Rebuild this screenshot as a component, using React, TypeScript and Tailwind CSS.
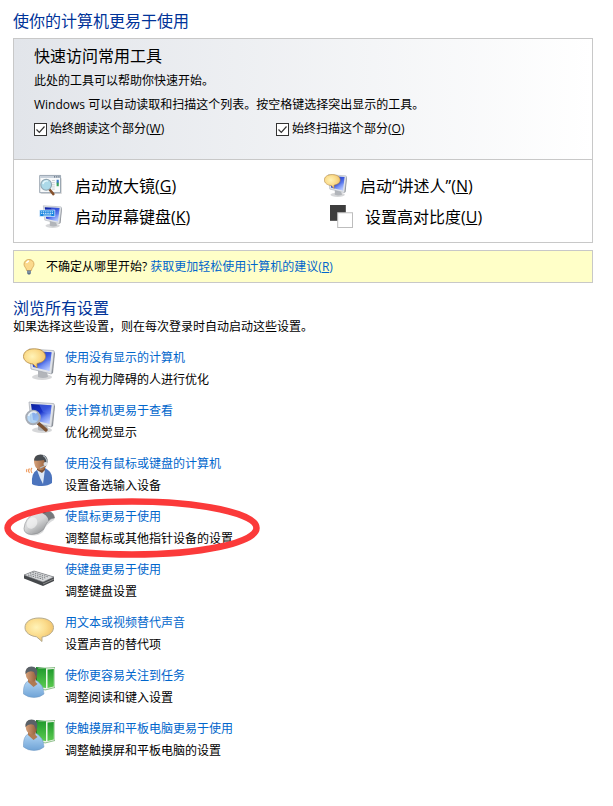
import type { ReactNode } from 'react'

// Gradients shared by all of the icons below.
function IconDefs() {
  return (
    <svg aria-hidden className="absolute size-0">
      <defs>
        <linearGradient id="screen" x1="0" y1="0" x2=".7" y2="1">
          <stop offset="0" stopColor="#0a1f9c" />
          <stop offset=".5" stopColor="#1a35cc" />
          <stop offset=".75" stopColor="#6f8cf2" />
          <stop offset="1" stopColor="#b4c6ff" />
        </linearGradient>
        <linearGradient id="metal" x1="0" y1="0" x2=".8" y2="1">
          <stop offset="0" stopColor="#f2f2f2" />
          <stop offset=".5" stopColor="#d4d5d6" />
          <stop offset="1" stopColor="#808285" />
        </linearGradient>
        <radialGradient id="gold" cx=".4" cy=".4" r=".7">
          <stop offset="0" stopColor="#fff3b8" />
          <stop offset=".5" stopColor="#fbdc8c" />
          <stop offset="1" stopColor="#eebb62" />
        </radialGradient>
        <linearGradient id="skin" x1="0" y1="0" x2="1" y2="0">
          <stop offset="0" stopColor="#d8a27a" />
          <stop offset="1" stopColor="#8e5a38" />
        </linearGradient>
        <linearGradient id="shirt" x1="0" y1="0" x2="0" y2="1">
          <stop offset="0" stopColor="#b5d8f6" />
          <stop offset="1" stopColor="#6fa3d6" />
        </linearGradient>
        <linearGradient id="book" x1="0" y1="0" x2="0" y2="1">
          <stop offset="0" stopColor="#1f9a2c" />
          <stop offset="1" stopColor="#5ccb50" />
        </linearGradient>
      </defs>
    </svg>
  )
}

function Monitor() {
  return (
    <g>
      <ellipse cx="19" cy="29" rx="10" ry="3" fill="#d6d7d9" />
      <path d="M15 22l9 2 1 5q-5 2-10 0z" fill="#b2b5ba" />
      <path d="M6 1L30 2.500q1.500 0 1.300 1.500L28.500 26 8 21z" fill="#e0e3e8" stroke="#a3a8b0" strokeWidth=".7" />
      <path d="M8 3l20.500 1.200-2 18.800L10 19z" fill="url(#screen)" />
      <path d="M16 3.500l12.500 .7-1 9L20 11z" fill="#5d7df0" opacity=".45" />
      <path d="M31.200 4l-2.700 22 1.500-1L32 5z" fill="#8d9299" />
    </g>
  )
}

function NarratorIcon() {
  return (
    <g>
      <Monitor />
      <path
        d="M11.500 .8C4.500.8.5 4 .5 8.500c0 4 4 7 9.500 7.500l4 4V15.500c5.500-.8 8.500-3.500 8.500-7 0-4.500-4.500-7.700-11-7.700z"
        fill="url(#gold)"
        stroke="#b38a45"
        strokeWidth=".8"
      />
    </g>
  )
}

function DisplayIcon() {
  return (
    <g>
      <Monitor />
      <path d="M15 22l8 7" stroke="#7c5334" strokeWidth="3.400" strokeLinecap="round" />
      <circle cx="10" cy="16.500" r="6.800" fill="#a8d0f5" fillOpacity=".8" stroke="#a7adb6" strokeWidth="2" />
      <path d="M5.500 15a5 5 0 0 1 8-3" fill="none" stroke="#fff" strokeOpacity=".7" strokeWidth="1.800" />
    </g>
  )
}

function HeadsetIcon() {
  return (
    <g>
      <path d="M9 30q-1-11 5-14l3-2h5l3 2q5 3 4 13-4 3-10 3-7 0-10-2z" fill="#4c74bd" />
      <path d="M14 16l3-2 5 1-2 15-3-6z" fill="#dce8f7" />
      <path d="M14 12h8v4l-3 3-5-3z" fill="#7d5236" />
      <path d="M11 7q0-6 6.500-6Q24 1 24 8q0 5-3.500 7.500-3 1.500-6-.5Q11 12 11 7z" fill="url(#skin)" />
      <path d="M11 6.500Q11.500 .5 17.500.5 25 .5 24.500 8L23 12l-2-6q-5 1-10 .5z" fill="#474c51" />
      <path d="M20 1.500q5 3 3.500 9.500L17 14" fill="none" stroke="#b4bdc6" strokeWidth="1.100" />
      <circle cx="22.500" cy="10" r="2" fill="#dce1e6" />
      <path d="M9 14q-2 2 0 5M6.500 14.500q-2 2 0 4.500M4 15q-1 2 0 3" fill="none" stroke="#ef9a5c" strokeWidth="1.100" />
    </g>
  )
}

function MouseIcon() {
  return (
    <g>
      <path d="M4 27q9 4 16-2 3-8 11-12l1-3-4 1-11 8z" fill="#c2c3c5" opacity=".6" />
      <path
        d="M1 21.500Q2 11 12 6q6-3 13-2 6 1 6.500 7-4 0-7 4-2 3-4 7.500-5 5-12 5-7.500-.5-7.500-6z"
        fill="url(#metal)"
        stroke="#8b8d90"
        strokeWidth=".6"
      />
      <path d="M15 5q6-2.500 11-1 5 2 5.500 7-4 0-6 3Q25 7 15 5z" fill="#76797c" />
      <path d="M17 4.500l4-1 2.500 1.500-3 1z" fill="#313437" />
      <ellipse cx="9" cy="16" rx="5" ry="6" transform="rotate(35 9 16)" fill="#fff" opacity=".5" />
    </g>
  )
}

function KeyboardIcon() {
  return (
    <g>
      <path d="M1 15l10-4 20 6v4l-11 5L1 18.500z" fill="#45484b" />
      <path d="M1 15l10-4 20 6-11 5z" fill="#d9dbdd" stroke="#77797d" strokeWidth=".6" />
      <path
        d="M5 15l16 4.500M7 13.700l16 4.500M9.500 12.500l16 4.500"
        stroke="#6c6f73"
        strokeWidth=".9"
        strokeDasharray="1.500 .9"
      />
      <path d="M20 24l11-5" stroke="#999" strokeWidth=".8" />
    </g>
  )
}

function BubbleIcon() {
  return (
    <g>
      <path
        d="M16 5C7.500 5 2 9 2 14.500c0 5 5 8.500 11.500 9.300l5.500 4.700V24c6.500-.8 11.500-4.500 11.500-9.500C30.500 9 24.500 5 16 5z"
        fill="url(#gold)"
        stroke="#b5ab8e"
        strokeWidth="1"
      />
    </g>
  )
}

function PersonBookIcon() {
  return (
    <g>
      <path d="M13 1l9 1v20l-9-2z" fill="#1b8228" />
      <path d="M15 2.500L32 1.500v20L22 24l-7-3z" fill="#eef6ea" stroke="#4f9b4c" strokeWidth=".6" />
      <path d="M14 3l9-.8V22l-9-1z" fill="url(#book)" />
      <path d="M24.500 3.500l6.300-.6v17.600l-6.300 1.600z" fill="url(#book)" />
      <path d="M.5 28q-1-11 6-14h6q8 4 8.500 14-4 3.500-10 3.500T.5 28z" fill="url(#shirt)" stroke="#6f97c0" strokeWidth=".5" />
      <path d="M5 12h7.500v4l2 2-4 3-5.500-5z" fill="#b07a52" />
      <path d="M2.500 7Q2.500 1 8.500 1 14 1 14 8q0 6-4 8-7-1-7.500-9z" fill="url(#skin)" />
      <path d="M2.500 8Q2 .5 8.500.5 15 .5 14.200 8L13 11l-2-5q-5-2-8.500 2z" fill="#596168" />
    </g>
  )
}

function MagnifierIcon() {
  return (
    <g>
      <path d="M3 27h28V6" fill="none" stroke="#ddd" strokeWidth="1.500" />
      <path d="M1 2h29v24H1z" fill="#f8fafb" stroke="#8593a1" strokeWidth="1.200" />
      <path d="M1.600 2.600h27.800v3H1.600z" fill="#c9d2dc" />
      <path d="M21 4h1.500M24 4h1.500M27 4h1.500" stroke="#506070" strokeWidth="1.500" />
      <path d="M18 9h4M18 12h4M18 15h4M18 18h4M18 21h4" stroke="#b7bdc3" strokeWidth="1" />
      <path d="M24.500 8h3v5h-3z" fill="#3a78c8" />
      <path d="M24.500 12h3v5h-3z" fill="#3aa05f" />
      <path d="M15 22l5 6" stroke="#86512c" strokeWidth="3.500" strokeLinecap="round" />
      <circle cx="10" cy="15" r="7.500" fill="#acd9e8" stroke="#8fa5b2" strokeWidth="1.500" />
      <path d="M5.500 14a5 5 0 0 1 7-4" fill="none" stroke="#e5f7fc" strokeWidth="2" />
    </g>
  )
}

function OnScreenKeyboardIcon() {
  return (
    <g>
      <Monitor />
      <path d="M1 7h21v9H1z" fill="#1584e0" stroke="#e8f3fd" strokeWidth="1" />
      <path d="M3 9.500h17M3 11.800h17" stroke="#fff" strokeWidth="1.200" strokeDasharray="1.500 1" />
      <path d="M6 14h11" stroke="#fff" strokeWidth="1" />
    </g>
  )
}

function ContrastIcon() {
  return (
    <g>
      <path d="M0 0h22v22H0z" fill="#3d3d3d" />
      <path d="M10.700 10.700h20.600v20.600H10.700z" fill="#fff" stroke="#bdbdbd" strokeWidth="1.400" />
    </g>
  )
}

function Icon({ className, children }: { className: string; children: ReactNode }) {
  return (
    <svg aria-hidden viewBox="0 0 32 32" className={`shrink-0 ${className}`}>
      {children}
    </svg>
  )
}

function Key({ children }: { children: string }) {
  return (
    <>
      (<u className="underline-offset-1">{children}</u>)
    </>
  )
}

function Check({ id, label, accessKey }: { id: string; label: string; accessKey: string }) {
  return (
    <div className="flex w-[242px] items-center gap-[3px]">
      <span className="relative flex size-[13px] shrink-0">
        <input
          id={id}
          type="checkbox"
          defaultChecked
          className="peer size-[13px] appearance-none border border-[#333] bg-white"
        />
        <svg
          aria-hidden
          viewBox="0 0 13 13"
          className="pointer-events-none absolute inset-0 hidden size-[13px] peer-checked:block"
        >
          <path d="M2.500 6.500l2.800 2.800 5.200-5.800" fill="none" stroke="#333" strokeWidth="1.200" />
        </svg>
      </span>
      <label htmlFor={id} className="whitespace-nowrap">
        {label}
        <Key>{accessKey}</Key>
      </label>
    </div>
  )
}

const tools = [
  { label: '启动放大镜', key: 'G', icon: <MagnifierIcon />, box: 'gap-[13px]' },
  { label: '启动“讲述人”', key: 'N', icon: <NarratorIcon />, box: 'gap-[13px]' },
  { label: '启动屏幕键盘', key: 'K', icon: <OnScreenKeyboardIcon />, box: 'gap-[13px]' },
  { label: '设置高对比度', key: 'U', icon: <ContrastIcon />, box: 'gap-3 pl-[6px]' },
]

const settings = [
  { title: '使用没有显示的计算机', text: '为有视力障碍的人进行优化', icon: <NarratorIcon /> },
  { title: '使计算机更易于查看', text: '优化视觉显示', icon: <DisplayIcon /> },
  { title: '使用没有鼠标或键盘的计算机', text: '设置备选输入设备', icon: <HeadsetIcon /> },
  { title: '使鼠标更易于使用', text: '调整鼠标或其他指针设备的设置', icon: <MouseIcon />, marked: true },
  { title: '使键盘更易于使用', text: '调整键盘设置', icon: <KeyboardIcon /> },
  { title: '用文本或视频替代声音', text: '设置声音的替代项', icon: <BubbleIcon /> },
  { title: '使你更容易关注到任务', text: '调整阅读和键入设置', icon: <PersonBookIcon /> },
  { title: '使触摸屏和平板电脑更易于使用', text: '调整触摸屏和平板电脑的设置', icon: <PersonBookIcon /> },
]

export default function App() {
  return (
    <main className="min-h-dvh bg-white pt-[9px] pr-5 pb-10 pl-[13px] font-['Open_Sans','Noto_Sans_CJK_SC',sans-serif] text-xs leading-6 text-black">
      <IconDefs />
      <h1 className="text-base leading-6 text-[#003399]">使你的计算机更易于使用</h1>

      <section className="mt-[5px] border border-[#c8c8c8]">
        <div className="border-b border-[#c8c8c8] bg-linear-to-r from-[#e2e5ea] to-white pt-1 pb-[18px] pl-5">
          <h2 className="text-base leading-[26px]">快速访问常用工具</h2>
          <p>此处的工具可以帮助你快速开始。</p>
          <p>Windows 可以自动读取和扫描这个列表。按空格键选择突出显示的工具。</p>
          <div className="flex">
            <Check id="read-aloud" label="始终朗读这个部分" accessKey="W" />
            <Check id="scan" label="始终扫描这个部分" accessKey="O" />
          </div>
        </div>
        <div className="grid grid-cols-[285px_1fr] py-[10px] pl-[25px]">
          {tools.map((tool) => (
            <button
              key={tool.key}
              type="button"
              className={`flex h-[31px] items-center text-left text-base whitespace-nowrap ${tool.box}`}
            >
              <Icon className="size-[23px]">{tool.icon}</Icon>
              <span>
                {tool.label}
                <Key>{tool.key}</Key>
              </span>
            </button>
          ))}
        </div>
      </section>

      <aside className="mt-[7px] flex h-[33px] items-center border border-[#c8c8c8] bg-[#ffffc8] pl-[7px]">
        <svg aria-hidden viewBox="0 0 16 16" className="mr-[9px] size-4 shrink-0">
          <path
            d="M8 .5C5 .5 3 2.600 3 5.300c0 2.400 2.300 3.500 2.600 6.200h4.800c.3-2.700 2.600-3.800 2.600-6.200C13 2.600 11 .5 8 .5z"
            fill="#fbd98c"
            stroke="#cc9848"
            strokeWidth=".7"
          />
          <path d="M5.500 4q1-2 2.500-2" fill="none" stroke="#fff" strokeWidth="1.500" />
          <path d="M6 11.500h4v2.500l-1 1.500H7L6 14z" fill="#5b7187" />
          <path d="M6 13h4" stroke="#b9c8d5" strokeWidth=".7" />
        </svg>
        <p>
          不确定从哪里开始?{' '}
          <a href="#suggestions" className="text-[#0066cc]">
            获取更加轻松使用计算机的建议
            <Key>R</Key>
          </a>
        </p>
      </aside>

      <section className="pt-[14px]">
        <h2 className="text-base leading-[22px] text-[#003399]">浏览所有设置</h2>
        <p className="leading-4">如果选择这些设置，则在每次登录时自动启动这些设置。</p>
        <ul className="mt-3 flex flex-col gap-[9px] pl-[10px] leading-[22px]">
          {settings.map((item) => (
            <li key={item.title} className="relative flex gap-[10px]">
              <Icon className="mt-px size-8">{item.icon}</Icon>
              <div>
                <a href="#setting" className="block text-[#0066cc]">
                  {item.title}
                </a>
                <p>{item.text}</p>
              </div>
              {item.marked && (
                <svg
                  aria-hidden
                  viewBox="0 0 258 60"
                  className="pointer-events-none absolute -top-2 -left-5 h-[60px] w-[258px]"
                >
                  <ellipse cx="129" cy="30" rx="124.500" ry="26.500" fill="none" stroke="#fb3a3a" strokeWidth="6.500" />
                </svg>
              )}
            </li>
          ))}
        </ul>
      </section>
    </main>
  )
}
